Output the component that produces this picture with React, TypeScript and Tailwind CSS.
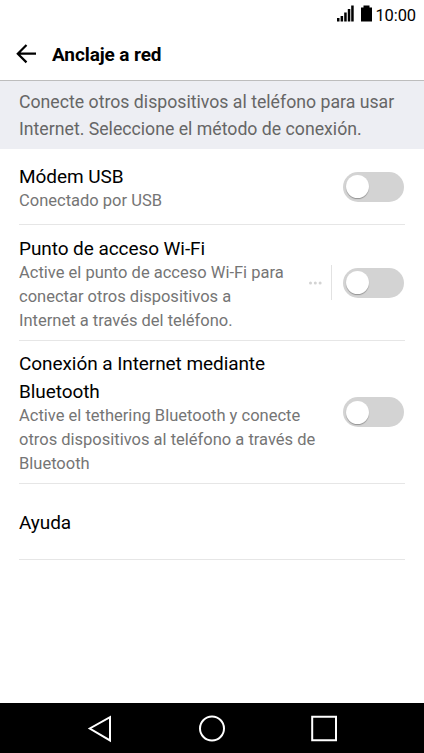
import { ReactNode } from 'react'

function Toggle() {
  return (
    <button
      role="switch"
      aria-checked={false}
      className="flex h-[30px] w-[61px] shrink-0 items-center rounded-full bg-[#d3d3d3] pl-[3px]"
    >
      <span className="size-[23px] rounded-full bg-white shadow-[0_1px_1px_rgba(0,0,0,0.3)]" />
    </button>
  )
}

interface RowProps {
  title: ReactNode
  summary?: ReactNode
  className: string
  children?: ReactNode
}

function Row({ title, summary, className, children }: RowProps) {
  return (
    <div className={`mx-[19px] flex items-center justify-between border-b border-[#e6e6e6] ${className}`}>
      <div className="whitespace-nowrap">
        <div className={`text-[19px] leading-[28px] tracking-[-0.07px] text-black ${summary ? 'pt-[2px] -mb-[2px]' : 'pt-[2px]'}`}>
          {title}
        </div>
        {summary && <div className="text-[16.5px] leading-[24px] text-[#757575]">{summary}</div>}
      </div>
      <div className="mr-px flex items-center">{children}</div>
    </div>
  )
}

function StatusBar() {
  return (
    <div className="flex h-[30px] items-center justify-end pr-[8px]">
      <svg width="17" height="17" viewBox="0 0 17 17" className="mr-[7px] -mt-[3px]">
        <path d="M0 13h2.5v3.5H0zM3.6 11h2.5v5.5H3.6zM7.2 7.5h2.5v9H7.2zM10.8 4h2.5v12.5h-2.5zM14.2 0.5h2.5v16h-2.5z" />
      </svg>
      <svg width="11" height="17" viewBox="0 0 11 17" className="mr-[3px] -mt-[3px]">
        <path d="M2.5 0.5h6v2H11v14H0v-14h2.5z" />
      </svg>
      <span className="pt-px text-[16.5px] leading-[30px] tracking-[-0.1px] text-black">10:00</span>
    </div>
  )
}

function NavBar() {
  return (
    <div className="flex h-[50px] justify-center bg-black">
      <svg width="424" height="50" viewBox="0 0 424 50" fill="none" stroke="#fff" strokeWidth="2">
        <path d="M110 14.2v23.2L89.8 25.5z" />
        <circle cx="212" cy="25.5" r="12" />
        <path d="M312.2 13.7h23.8v23.6h-23.8z" />
      </svg>
    </div>
  )
}

function App() {
  return (
    <div className="flex h-[753px] w-[424px] flex-col overflow-hidden bg-white font-['Roboto',sans-serif]">
      <StatusBar />

      {/* Title bar */}
      <header className="flex h-[51px] items-center border-b border-[#bdbdbd] pl-[16px]">
        <svg width="21" height="20" viewBox="0 0 21 20" fill="none" stroke="#000" strokeWidth="2.2" className="mr-[15px] -mt-[2px]">
          <path d="M10.5 1L1.8 9.7l8.7 8.7M1.8 9.7H20" />
        </svg>
        <h1 className="pt-px text-[19px] font-bold tracking-[-0.1px] text-black">Anclaje a red</h1>
      </header>

      <p className="h-[68px] bg-[#edeef3] pl-[19px] pt-[8px] text-[17.7px] leading-[26.5px] whitespace-nowrap text-[#666]">
        Conecte otros dispositivos al teléfono para usar
        <br />
        Internet. Seleccione el método de conexión.
      </p>

      <Row title="Módem USB" summary="Conectado por USB" className="h-[76px]">
        <Toggle />
      </Row>

      <Row
        title="Punto de acceso Wi-Fi"
        summary={<>Active el punto de acceso Wi-Fi para<br />conectar otros dispositivos a<br />Internet a través del teléfono.</>}
        className="h-[116px]"
      >
        <svg width="13" height="4" viewBox="0 0 13 4" fill="#d3d3d3" className="mr-[9px]">
          <circle cx="1.5" cy="2" r="1.5" />
          <circle cx="6.3" cy="2" r="1.5" />
          <circle cx="11.1" cy="2" r="1.5" />
        </svg>
        <div className="mr-[11px] h-[35px] w-px bg-[#e2e2e2]" />
        <Toggle />
      </Row>

      <Row
        title={<>Conexión a Internet mediante<br />Bluetooth</>}
        summary={<>Active el tethering Bluetooth y conecte<br />otros dispositivos al teléfono a través de<br />Bluetooth</>}
        className="h-[143px]"
      >
        <Toggle />
      </Row>

      <Row title="Ayuda" className="h-[76px]" />

      <div className="flex-1" />
      <NavBar />
    </div>
  )
}

export default App
